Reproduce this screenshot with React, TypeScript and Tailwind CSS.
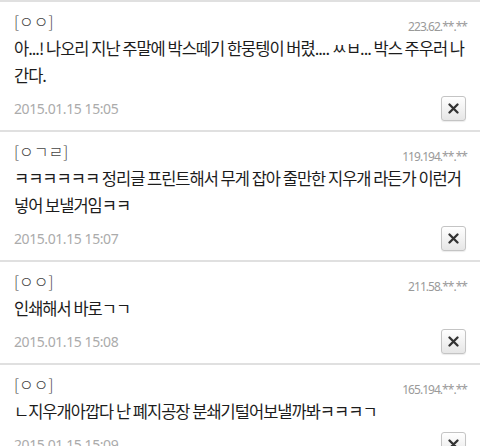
import React from "react";

type C = { name: string; ip: string; text: string; date: string };

const comments: C[] = [
  {
    name: "[ㅇㅇ]",
    ip: "223.62.**.**",
    text: "아...! 나오리 지난 주말에 박스떼기 한뭉텡이 버렸.... ㅆㅂ... 박스 주우러 나간다.",
    date: "2015.01.15 15:05",
  },
  {
    name: "[ㅇㄱㄹ]",
    ip: "119.194.**.**",
    text: "ㅋㅋㅋㅋㅋㅋ 정리글 프린트해서 무게 잡아 줄만한 지우개 라든가 이런거 넣어 보낼거임ㅋㅋ",
    date: "2015.01.15 15:07",
  },
  {
    name: "[ㅇㅇ]",
    ip: "211.58.**.**",
    text: "인쇄해서 바로ㄱㄱ",
    date: "2015.01.15 15:08",
  },
  {
    name: "[ㅇㅇ]",
    ip: "165.194.**.**",
    text: "ㄴ지우개아깝다 난 폐지공장 분쇄기털어보낼까봐ㅋㅋㅋㄱ",
    date: "2015.01.15 15:09",
  },
];

function XButton() {
  return (
    <button className="w-[25px] h-[25px] flex items-center justify-center rounded-[3px] border border-[#c4c4c4] bg-gradient-to-b from-[#ffffff] to-[#e6e6e6] shadow-[0_1px_1px_rgba(0,0,0,0.08)]">
      <svg width="11" height="11" viewBox="0 0 11 11">
        <path d="M1.5 1.5 L9.5 9.5 M9.5 1.5 L1.5 9.5" stroke="#333" strokeWidth="2.3" strokeLinecap="round" />
      </svg>
    </button>
  );
}

function Comment({ c }: { c: C }) {
  return (
    <div className="border-t-2 border-[#e0e0e0] pl-[14px] pr-[12px] pt-[9px] pb-[9px]">
      <div className="flex items-end justify-between h-[20px]">
        <span className="text-[16px] leading-[20px] text-[#444] font-['Noto_Sans_CJK_KR',sans-serif] font-light">
          {c.name}
        </span>
        <span className="text-[12px] leading-[16px] mb-[-4px] text-[#9a9a9a] tracking-[-0.08em] font-['Noto_Sans','Noto_Sans_CJK_KR',sans-serif] mr-[1px]">
          {c.ip}
        </span>
      </div>
      <p className="mt-[4px] text-[16.5px] leading-[27px] text-[#1c1c1c] tracking-[-1px] font-['Noto_Sans_CJK_KR',sans-serif]">
        {c.text}
      </p>
      <div className="mt-[7px] flex items-center justify-between h-[25px] pr-[2px]">
        <span className="text-[14px] leading-[20px] text-[#ababab] tracking-[-0.03em] font-['Noto_Sans',sans-serif]">
          {c.date}
        </span>
        <XButton />
      </div>
    </div>
  );
}

export default function App() {
  return (
    <div className="w-[480px] h-[446px] overflow-hidden bg-white">
      {comments.map((c, i) => (
        <Comment key={i} c={c} />
      ))}
    </div>
  );
}
